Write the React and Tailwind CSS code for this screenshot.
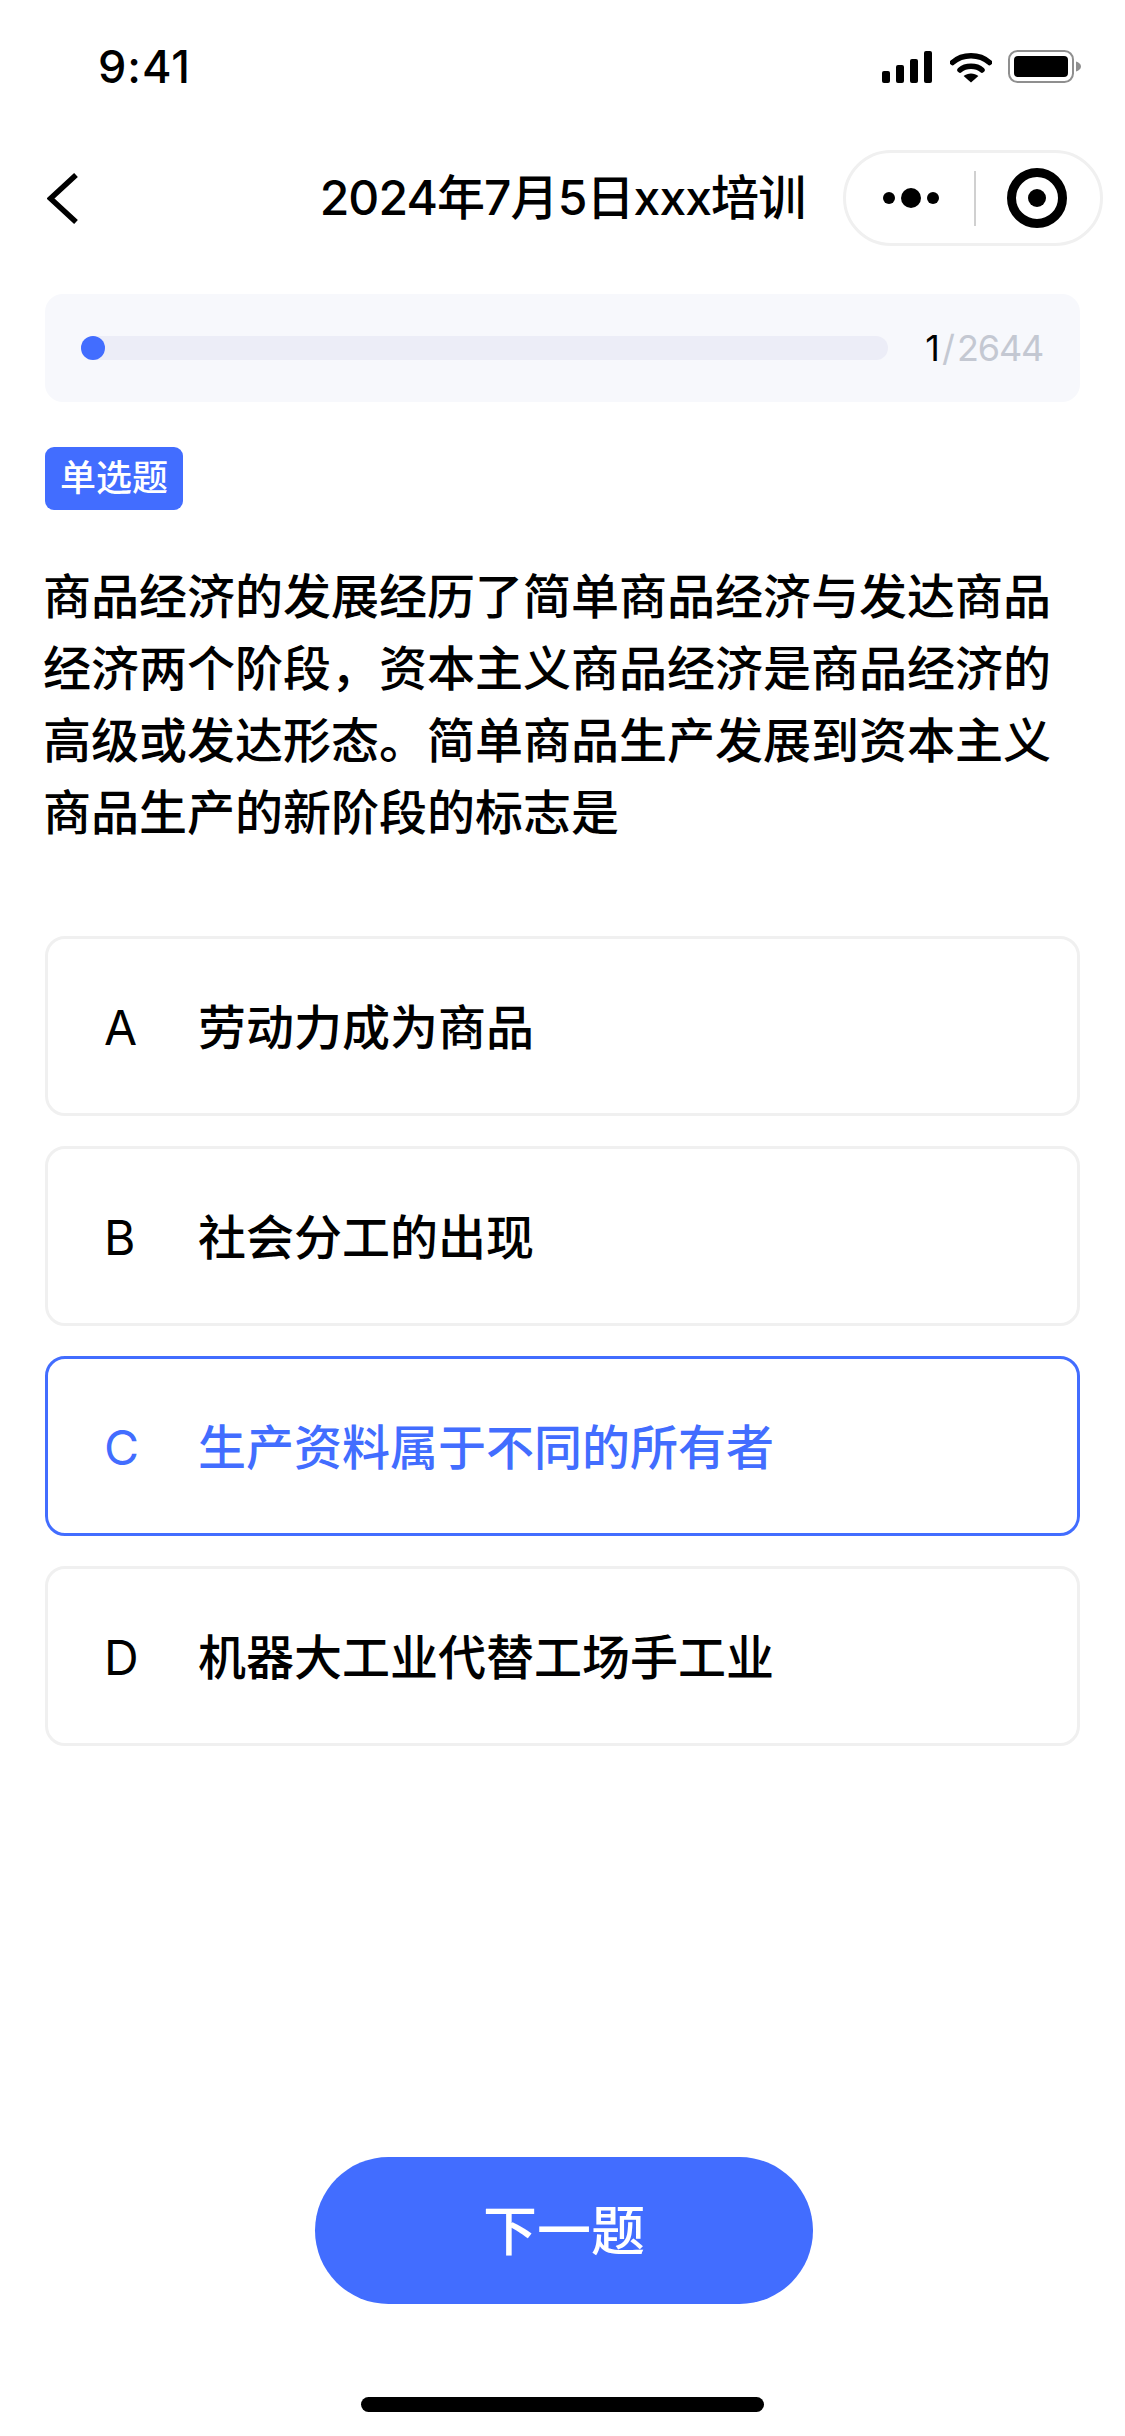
import React from 'react';

const FONT = 'font-["Inter","Noto_Sans_CJK_SC",sans-serif]';

const OPTIONS = [
  { key: 'A', text: '劳动力成为商品' },
  { key: 'B', text: '社会分工的出现' },
  { key: 'C', text: '生产资料属于不同的所有者', active: true },
  { key: 'D', text: '机器大工业代替工场手工业' },
];

const StatusIcons = () => (
  <div className="flex items-center">
    <svg width="50" height="32" viewBox="0 0 50 32" fill="#000">
      <rect x="0" y="20" width="8" height="12" rx="2" />
      <rect x="14" y="14" width="8" height="18" rx="2" />
      <rect x="28" y="8" width="8" height="24" rx="2" />
      <rect x="42" y="0" width="8" height="32" rx="2" />
    </svg>
    <svg className="ml-[18px]" width="42" height="32" viewBox="0 0 42 32" fill="none">
      <path d="M2.5 11.5C12.5 2.5 29.5 2.5 39.5 11.5" stroke="#000" strokeWidth="5.5" strokeLinecap="round" />
      <path d="M10 19C15.5 14 26.5 14 32 19" stroke="#000" strokeWidth="5.5" strokeLinecap="round" />
      <path d="M21 31.5L13.6 25C17.6 21.6 24.4 21.6 28.4 25Z" fill="#000" />
    </svg>
    <svg className="ml-[16px]" width="73" height="33" viewBox="0 0 73 33" fill="none">
      <rect x="1" y="1" width="64" height="31" rx="8.5" stroke="#8f8f8f" strokeWidth="2" />
      <rect x="6" y="6" width="54" height="21" rx="4" fill="#000" />
      <path d="M68 11.5C70.8 12.4 73 14 73 16.5C73 19 70.8 20.6 68 21.5Z" fill="#8f8f8f" />
    </svg>
  </div>
);

const Capsule = () => (
  <div className="flex h-[96px] w-[260px] items-center justify-self-end rounded-full border-[3px] border-[#f0f0f0] bg-white">
    <svg className="ml-[37px]" width="60" height="20" viewBox="0 0 60 20" fill="#000">
      <circle cx="6" cy="10" r="6" />
      <circle cx="28" cy="10" r="10" />
      <circle cx="50" cy="10" r="6" />
    </svg>
    <div className="ml-[31px] h-[55px] w-[2px] bg-[#d0d0d0]" />
    <svg className="ml-[31px]" width="60" height="60" viewBox="0 0 60 60" fill="none">
      <circle cx="30" cy="30" r="25.5" stroke="#000" strokeWidth="9" />
      <circle cx="30" cy="30" r="9" fill="#000" />
    </svg>
  </div>
);

export default function App() {
  return (
    <div className={`${FONT} flex h-[2436px] w-[1125px] flex-col overflow-hidden bg-white text-black`}>
      <div className="flex h-[132px] items-start justify-between pl-[98px] pr-[44px] pt-[50px]">
        <span className="text-[45px] font-medium leading-[33px] tracking-[1px]">9:41</span>
        <StatusIcons />
      </div>

      <div className="grid h-[132px] grid-cols-[1fr_auto_1fr] items-center px-[22px]">
        <svg className="ml-[25px]" width="31" height="51" viewBox="0 0 31 51" fill="none">
          <path d="M29 2L3.5 25.5L29 49" stroke="#000" strokeWidth="5.5" />
        </svg>
        <div className="text-[48px] font-medium leading-[60px] tracking-[-0.9px]">2024年7月5日xxx培训</div>
        <Capsule />
      </div>

      <div className="mx-[45px] mt-[30px] flex h-[108px] items-center rounded-[18px] bg-[#f7f8fc] pl-[36px] pr-[37px]">
        <div className="h-[24px] w-[807px] rounded-full bg-[#ecedf7]">
          <div className="h-[24px] w-[24px] rounded-full bg-[#426dff]" />
        </div>
        <div className="ml-auto flex text-[36px] leading-[44px] text-[#c4c8d2]">
          <span className="text-black">1</span>
          <span className="mx-[2px]">/</span>
          <span className="tracking-[-1.2px]">2644</span>
        </div>
      </div>

      <div className="mx-[45px] mt-[45px] flex h-[63px] w-[138px] items-center justify-center rounded-[9px] bg-[#426dff] text-[36px] font-medium leading-[63px] text-white">
        单选题
      </div>

      <p className="ml-[43px] mr-[45px] mt-[51px] text-[48px] font-medium leading-[72px]">
        商品经济的发展经历了简单商品经济与发达商品经济两个阶段，资本主义商品经济是商品经济的高级或发达形态。简单商品生产发展到资本主义商品生产的新阶段的标志是
      </p>

      <div className="mx-[45px] mt-[87px] flex flex-col gap-[30px]">
        {OPTIONS.map((o) => (
          <div
            key={o.key}
            className={`flex h-[180px] items-center rounded-[20px] border-[3px] bg-white pl-[56px] pt-[3px] text-[48px] ${o.active ? 'border-[#426dff] text-[#426dff]' : 'border-[#f0f0f0] text-black'}`}
          >
            <span className="w-[94px] font-normal">{o.key}</span>
            <span className="font-medium">{o.text}</span>
          </div>
        ))}
      </div>

      <div className="ml-[315px] mt-auto flex h-[147px] w-[498px] items-center justify-center rounded-full bg-[#426dff] pt-[2px] text-[54px] font-medium text-white">
        下一题
      </div>
      <div className="mb-[24px] mt-[93px] h-[15px] w-[403px] self-center rounded-full bg-black" />
    </div>
  );
}
